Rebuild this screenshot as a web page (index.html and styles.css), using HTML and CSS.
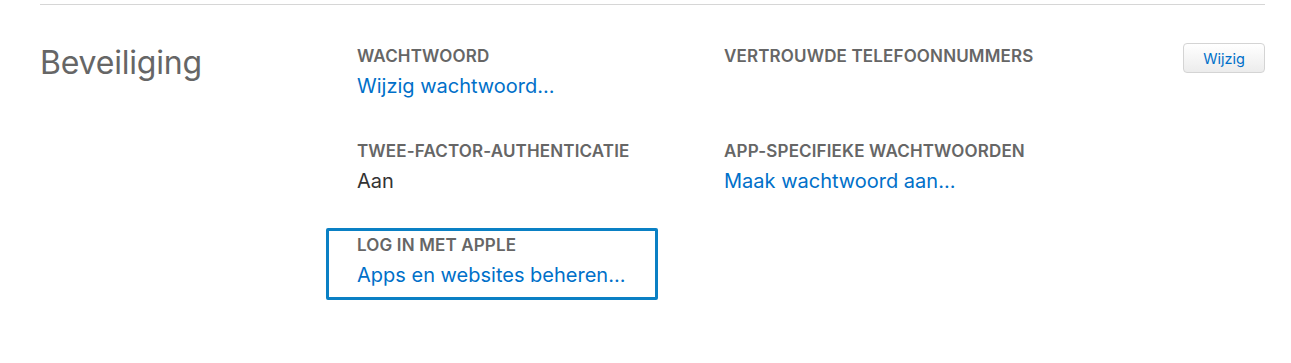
FILE: index.html
```html
<!DOCTYPE html>
<html lang="nl">
<head>
<meta charset="utf-8">
<link rel="stylesheet" href="styles.css">
</head>
<body>
<div class="page">
  <section class="section">
    <h2 class="section-title">Beveiliging</h2>
    <div class="fields">
      <div class="field">
        <div class="label">Wachtwoord</div>
        <a class="link" href="#">Wijzig wachtwoord...</a>
      </div>
      <div class="field field-with-action">
        <div class="label">Vertrouwde telefoonnummers</div>
        <button class="btn" type="button">Wijzig</button>
      </div>
      <div class="field">
        <div class="label">Twee-factor-authenticatie</div>
        <div class="value">Aan</div>
      </div>
      <div class="field">
        <div class="label">App-specifieke wachtwoorden</div>
        <a class="link" href="#">Maak wachtwoord aan...</a>
      </div>
      <div class="field highlighted">
        <div class="label">Log in met Apple</div>
        <a class="link" href="#">Apps en websites beheren...</a>
      </div>
    </div>
  </section>
</div>
</body>
</html>
```
FILE: styles.css
```css
*, *::before, *::after { box-sizing: border-box; }
html, body { margin: 0; padding: 0; background: #fff; }
body { font-family: Inter, "Noto Sans", sans-serif; }
.page { padding: 4px 26px 0 40px; }
.section {
  border-top: 1px solid #d6d6d6;
  display: flex;
  padding-top: 36px;
}
.section-title {
  margin: 0;
  width: 317px;
  flex: none;
  font-size: 32px;
  font-weight: 400;
  color: #666;
  line-height: 44px;
  letter-spacing: -0.2px;
}
.fields {
  flex: 1;
  display: grid;
  grid-template-columns: 367px 1fr;
  grid-template-rows: 95px 94px 80px;
}
.field { position: relative; padding-top: 5px; }
.label {
  font-size: 17px;
  font-weight: 600;
  color: #666;
  text-transform: uppercase;
  line-height: 20px;
  letter-spacing: 0.15px;
}
.link, .value {
  display: block;
  margin-top: 7px;
  font-size: 20px;
  line-height: 26px;
  text-decoration: none;
}
.link { color: #0070c9; }
.value { color: #333; }
.field-with-action { display: flex; justify-content: space-between; align-items: flex-start; }
.btn {
  margin-top: -3px;
  width: 82px;
  height: 30px;
  border: 1px solid #d4d4d4;
  border-radius: 4px;
  background: linear-gradient(#ffffff, #ececec);
  color: #0070c9;
  font-family: inherit;
  font-size: 14.5px;
  padding: 0;
}
.highlighted::after {
  content: "";
  position: absolute;
  left: -31px;
  top: -2px;
  width: 332px;
  height: 72px;
  border: 3px solid #0a80c4;
  border-radius: 2px;
}
```
